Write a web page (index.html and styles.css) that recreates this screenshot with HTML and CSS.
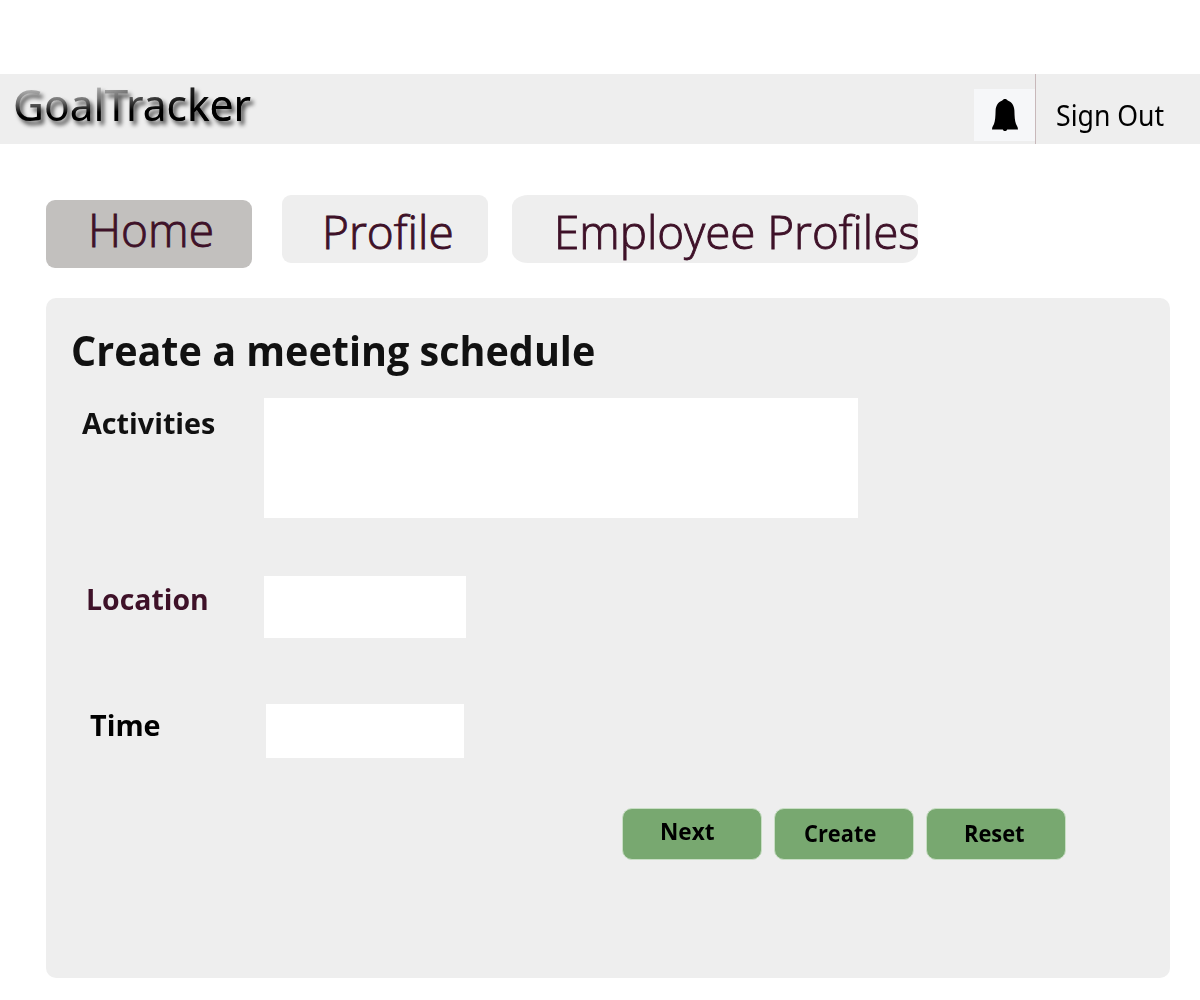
FILE: index.html
```html
<!DOCTYPE html>
<html lang="en">
<head>
<meta charset="utf-8">
<title>GoalTracker</title>
<link rel="stylesheet" href="styles.css">
</head>
<body>
<header class="topbar">
  <div class="logo"><span class="logo-text">GoalTracker</span></div>
  <div class="alerts">
    <svg class="bell" viewBox="0 0 28 34" width="28" height="34"><path d="M14 1c-1.300 0-2.200.7-2.700 1.500C7 4 4.800 7.800 4.600 12.500c-.2 6-.3 10-1.600 13.500-.5 1.500-1.900 2.500-2 5.500h10.800c.5 1 1.200 1.500 2.200 1.500s1.700-.5 2.200-1.500H27c-.1-3-1.500-4-2-5.500-1.300-3.500-1.400-7.500-1.600-13.500C23.200 7.800 21 4 16.700 2.500 16.200 1.700 15.300 1 14 1z"/></svg>
  </div>
  <a class="signout"><span class="signout-text">Sign Out</span></a>
</header>
<nav class="tabs">
  <a class="tab tab-home"><span class="t-home">Home</span></a>
  <a class="tab tab-profile"><span class="t-profile">Profile</span></a>
  <a class="tab tab-employees"><span class="t-employees">Employee Profiles</span></a>
</nav>
<main class="panel">
  <h1 class="title"><span class="title-text">Create a meeting schedule</span></h1>
  <div class="row row-activities"><label class="label l-activities"><span class="t-activities">Activities</span></label><div class="field f-activities"></div></div>
  <div class="row row-location"><label class="label l-location"><span class="t-location">Location</span></label><div class="field f-location"></div></div>
  <div class="row row-time"><label class="label l-time"><span class="t-time">Time</span></label><div class="field f-time"></div></div>
  <div class="actions">
    <button class="btn b-next"><span class="t-next">Next</span></button>
    <button class="btn b-create"><span class="t-create">Create</span></button>
    <button class="btn b-reset"><span class="t-reset">Reset</span></button>
  </div>
</main>
</body>
</html>
```
FILE: styles.css
```css
* { box-sizing: border-box; }
body { margin: 0; padding-top: 74px; height: 1000px; overflow: hidden; background: #fff; font-family: "Open Sans", "Noto Sans", sans-serif; color: #000; }
span { display: inline-block; white-space: nowrap; transform-origin: 0 50%; }

.topbar { display: flex; height: 70px; background: #eee; }
.logo { width: 974px; padding-left: 12.500px; font: 400 44.500px/60px "Noto Sans", sans-serif; filter: drop-shadow(3px 4px 2px rgba(0,0,0,.7)); }
.logo-text { color: transparent; background: linear-gradient(90deg, transparent 40%, #000 85%), linear-gradient(178deg, #aaa 25%, #777 40%, #000 60%); background-clip: text; -webkit-background-clip: text; transform: scaleX(.955); }
.alerts { width: 61px; height: 52px; margin-top: 15px; padding: 9px 0 0 17px; background: #f6f7f9; }
.bell { display: block; }
.signout { flex: 1; border-left: 1px solid #c8b8ba; padding-left: 20px; font: 400 28.500px/83px "Noto Sans", sans-serif; }
.signout-text { transform: scaleX(.935); }

.tabs { display: flex; align-items: flex-start; height: 154px; padding: 51px 0 0 46px; }
.tab { height: 68px; border-radius: 9px; background: #eee; color: #3e1128; font-weight: 300; font-size: 46px; line-height: 72px; -webkit-text-stroke: .9px #3e1128; }
.tab-home { width: 206px; margin: 5px 30px 0 0; padding-left: 42px; background: #c2c0be; line-height: 58px; }
.tab-profile { width: 206px; margin-right: 24px; padding-left: 40px; }
.tab-employees { width: 406px; padding-left: 42px; border-radius: 16px / 12px; }
.t-employees { transform: scaleX(.995); }

.panel { width: 1124px; height: 680px; margin-left: 46px; padding-top: 26px; border-radius: 10px; background: #eee; }
.title { height: 74px; margin: 0; padding-left: 25px; font-size: 41px; line-height: 52px; font-weight: 700; color: #111; }
.title-text { transform: scaleX(.964); }
.row { display: flex; align-items: flex-start; }
.row-activities { height: 178px; }
.row-location { height: 128px; }
.row-time { height: 104px; }
.label { width: 218px; font-size: 29px; font-weight: 700; line-height: 50px; }
.l-activities { padding-left: 36px; color: #111; }
.l-location { padding-left: 40px; line-height: 46px; color: #3e1128; }
.l-time { width: 220px; padding-left: 44px; line-height: 42px; }
.t-activities { transform: scaleX(.99); }
.t-location { transform: scaleX(.98); }
.t-time { transform: scaleX(.99); }
.field { background: #fff; }
.f-activities { width: 594px; height: 120px; }
.f-location { width: 202px; height: 62px; }
.f-time { width: 198px; height: 54px; }
.actions { display: flex; gap: 12px; padding-left: 576px; }
.btn { width: 140px; height: 52px; padding: 0 0 2px; border: 1px solid #c8dec4; border-radius: 10px; background: #78a870; color: #000; font: 700 23px/48px "Open Sans", sans-serif; text-align: left; }
.b-next { padding-left: 37px; line-height: 44px; padding-bottom: 6px; }
.b-create { padding-left: 29px; }
.b-reset { padding-left: 37px; }
.t-next { transform: scaleX(.98); }
.t-create { transform: scaleX(.95); }
.t-reset { transform: scaleX(.95); }
```
